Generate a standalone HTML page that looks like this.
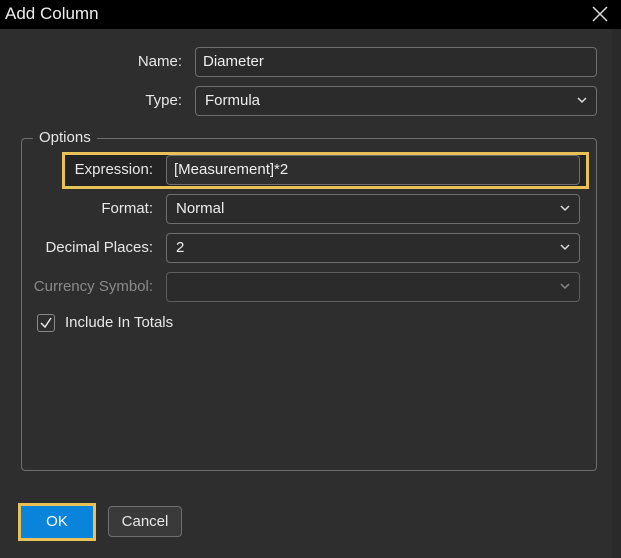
<!DOCTYPE html>
<html><head><style>
*{box-sizing:border-box;margin:0;padding:0}
body{width:621px;height:558px;background:#2b2b2b;font-family:"Liberation Sans",sans-serif;color:#e8e8e8;font-size:15px;position:relative;overflow:hidden}
.abs{position:absolute}
.title{left:0;top:0;width:621px;height:29px;background:#000;color:#eee;font-size:17px;line-height:28px;padding-left:5px}
.body{left:0;top:29px;width:612px;height:529px;background:#2e2e2e}
.side{left:612px;top:29px;width:9px;height:529px;background:#2a2a2a}
.inp{border:1px solid #6e6e6e;border-radius:4px;background:#2b2b2b;padding-left:7px;line-height:28px;color:#eee}
.lbl{text-align:right;line-height:30px}
.chev{position:absolute;right:8px;top:8px;width:12px;height:10px}
</style></head><body>
<div class="abs title">Add Column</div>
<svg class="abs" style="left:592px;top:6px" width="16" height="16"><path d="M1 1L15 15M15 1L1 15" stroke="#ddd" stroke-width="1.5"/></svg>
<div class="abs body"></div>
<div class="abs side"></div>

<div class="abs lbl" style="left:60px;top:47px;width:122px">Name:</div>
<div class="abs inp" style="left:195px;top:47px;width:402px;height:30px">Diameter</div>
<div class="abs lbl" style="left:60px;top:86px;width:122px">Type:</div>
<div class="abs inp" style="left:195px;top:86px;width:402px;height:30px;padding-left:9px">Formula<svg class="chev" viewBox="0 0 12 10"><path d="M2 3L6 7L10 3" stroke="#ddd" stroke-width="1.5" fill="none"/></svg></div>

<div class="abs" style="left:21px;top:138px;width:576px;height:333px;border:1px solid #6e6e6e;border-radius:4px"></div>
<div class="abs" style="left:33px;top:128px;background:#2e2e2e;padding:0 6px;line-height:20px">Options</div>

<div class="abs" style="left:62px;top:152px;width:527px;height:37px;border:3px solid #e8c158;background:#242424"></div>
<div class="abs lbl" style="left:30px;top:155px;width:123px">Expression:</div>
<div class="abs inp" style="left:166px;top:155px;width:414px;height:30px;background:#2e2e2e">[Measurement]*2</div>

<div class="abs lbl" style="left:30px;top:194px;width:123px">Format:</div>
<div class="abs inp" style="left:166px;top:194px;width:414px;height:30px;padding-left:9px">Normal<svg class="chev" viewBox="0 0 12 10"><path d="M2 3L6 7L10 3" stroke="#ddd" stroke-width="1.5" fill="none"/></svg></div>
<div class="abs lbl" style="left:10px;top:233px;width:143px">Decimal Places:</div>
<div class="abs inp" style="left:166px;top:233px;width:414px;height:30px;padding-left:9px">2<svg class="chev" viewBox="0 0 12 10"><path d="M2 3L6 7L10 3" stroke="#ddd" stroke-width="1.5" fill="none"/></svg></div>
<div class="abs lbl" style="left:10px;top:272px;width:143px;color:#8a8a8a">Currency Symbol:</div>
<div class="abs inp" style="left:166px;top:272px;width:414px;height:30px;border-color:#5e5e5e"><svg class="chev" viewBox="0 0 12 10"><path d="M2 3L6 7L10 3" stroke="#888" stroke-width="1.5" fill="none"/></svg></div>

<div class="abs" style="left:37px;top:314px;width:18px;height:18px;border:1px solid #8a8a8a;border-radius:3px"></div>
<svg class="abs" style="left:37px;top:314px" width="18" height="18"><path d="M4 9L8 13L14 4" stroke="#eee" stroke-width="1.4" fill="none"/></svg>
<div class="abs" style="left:65px;top:314px;line-height:18px">Include In Totals</div>

<div class="abs" style="left:18px;top:503px;width:78px;height:38px;border:3px solid #e8c158;background:#0a84db;color:#fff;text-align:center;line-height:32px">OK</div>
<div class="abs" style="left:108px;top:506px;width:74px;height:31px;border:1px solid #6e6e6e;border-radius:4px;background:#3a3a3a;text-align:center;line-height:29px">Cancel</div>
</body></html>
